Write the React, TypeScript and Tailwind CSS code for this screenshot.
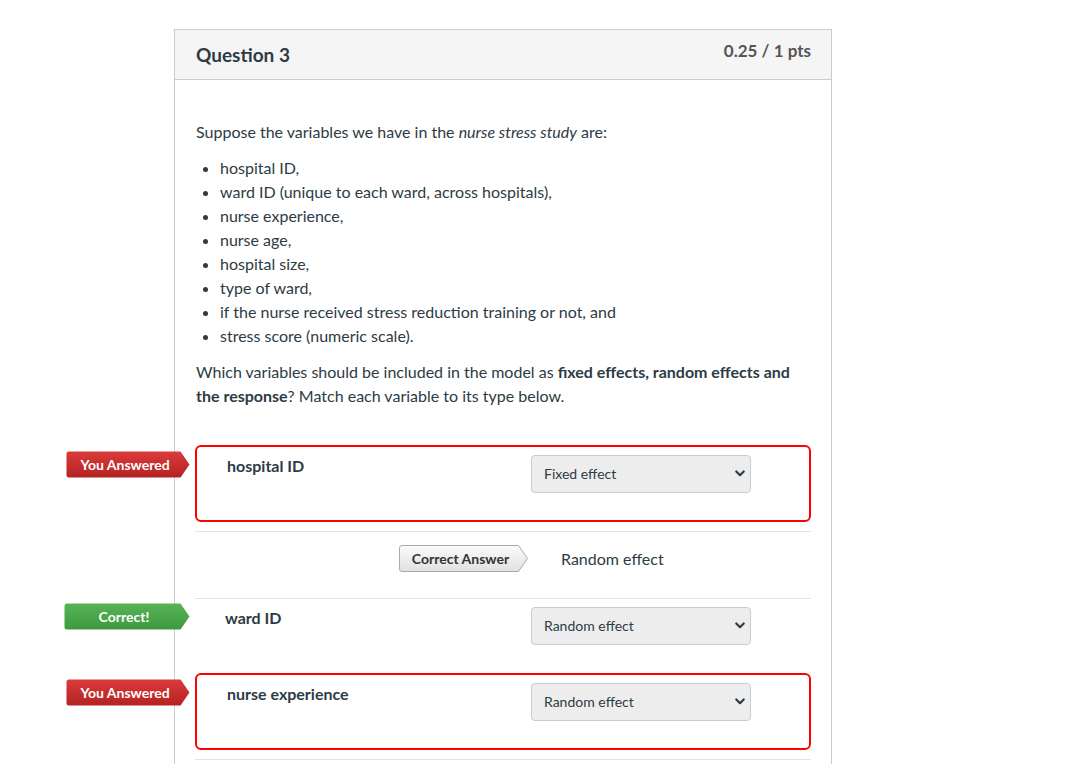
import { ReactNode } from "react";

type BadgeProps = {
    label: string;
    width: number;
    from: string;
    to: string;
    stroke?: string;
    textClass: string;
};

function ArrowBadge({ label, width, from, to, stroke, textClass }: BadgeProps) {
    const h = 27;
    const id = `g-${label.replace(/[^a-z]/gi, "")}`;
    const d = `M3,0.5 H${width - 9.5} L${width - 0.5},${h / 2} L${width - 9.5},${h - 0.5} H3 Q0.5,${h - 0.5} 0.5,${h - 3} V3 Q0.5,0.5 3,0.5 Z`;
    return (
        <div className="relative h-[27px] flex items-center" style={{ width }}>
            <svg className="absolute inset-0" width={width} height={h} viewBox={`0 0 ${width} ${h}`}>
                <defs>
                    <linearGradient id={id} x1="0" y1="0" x2="0" y2="1">
                        <stop offset="0" stopColor={from} />
                        <stop offset="1" stopColor={to} />
                    </linearGradient>
                </defs>
                <path d={d} fill={`url(#${id})`} stroke={stroke ?? "none"} strokeWidth={1} />
            </svg>
            <span className={`relative w-full pr-[6px] text-center text-[14px] font-bold leading-none ${textClass}`}>
                {label}
            </span>
        </div>
    );
}

function FakeSelect({ value }: { value: string }) {
    return (
        <div className="w-[220px] h-[38px] shrink-0 flex items-center justify-between pl-[12px] pr-[5px] pb-[1px] bg-[#ededed] border border-[#c7cdd1] rounded-[4px] text-[14px] text-[#2d3b45]">
            <span>{value}</span>
            <svg width="10" height="7" viewBox="0 0 10 7" fill="none">
                <path d="M1.3 1.5 L5 5.2 L8.7 1.5" stroke="#2d3b45" strokeWidth="2.2" strokeLinecap="round" strokeLinejoin="round" />
            </svg>
        </div>
    );
}

function YouAnswered() {
    return (
        <div className="absolute left-[-129px] top-[6px]">
            <ArrowBadge label="You Answered" width={124} from="#db3b3b" to="#b42222" textClass="text-white" />
        </div>
    );
}

function AnswerRow({ label, value, wrong, badge }: { label: string; value: string; wrong: boolean; badge: ReactNode }) {
    return (
        <div className="relative">
            {badge}
            <div
                className={`flex pt-[8px] pl-[30px] ${wrong ? "border-2 border-[#ff0000] rounded-[6px] pb-[27px]" : "pb-[28px]"}`}
            >
                <div className={`${wrong ? "w-[304px]" : "w-[306px]"} -mt-[1px] shrink-0 text-[16px] font-bold leading-[24px] text-[#2d3b45]`}>
                    {label}
                </div>
                <FakeSelect value={value} />
            </div>
        </div>
    );
}

export default function App() {
    return (
        <div className="min-h-[764px] bg-white pt-[29px] pl-[174px] font-['Lato','Liberation_Sans',sans-serif] text-[#2d3b45]">
            <div className="w-[658px] border border-b-0 border-[#c7cdd1] min-h-[735px]">
                {/* Header */}
                <div className="h-[50px] bg-[#f5f5f5] border-b border-[#c7cdd1] pl-[21px] pr-[20px] flex justify-between items-start">
                    <h2 className="mt-[12px] text-[19px] font-bold leading-[26px] text-[#2d3b45]">Question 3</h2>
                    <div className="mt-[10px] text-[17px] font-bold leading-[22px] text-[#555]">0.25 / 1 pts</div>
                </div>

                {/* Body */}
                <div className="px-[20px] pt-[40px] text-[16px] leading-[24px]">
                    <div className="pl-[1px]">
                        <p>
                            Suppose the variables we have in the <em>nurse stress study</em> are:
                        </p>
                        <ul className="list-disc pl-[24px] mt-[12px]">
                            <li>hospital ID,</li>
                            <li>ward ID (unique to each ward, across hospitals),</li>
                            <li>nurse experience,</li>
                            <li>nurse age,</li>
                            <li>hospital size,</li>
                            <li>type of ward,</li>
                            <li>if the nurse received stress reduction training or not, and</li>
                            <li>stress score (numeric scale).</li>
                        </ul>
                        <p className="mt-[12px]">
                            Which variables should be included in the model as <strong>fixed effects, random effects and the response</strong>? Match each variable to its type below.
                        </p>
                    </div>

                    {/* Answers */}
                    <div className="mt-[37px]">
                        <AnswerRow label="hospital ID" value="Fixed effect" wrong badge={<YouAnswered />} />
                        <div className="mt-[9px] border-t border-b border-[#e2e4e6] h-[68px] flex items-start pt-[13px] pl-[204px]">
                            <ArrowBadge label="Correct Answer" width={129} from="#fbfbfb" to="#e1e1e1" stroke="#a9a9a9" textClass="text-[#333]" />
                            <span className="ml-[33px] mt-[2px] text-[16px] leading-[24px] text-[#2d3b45]">Random effect</span>
                        </div>
                        <AnswerRow
                            label="ward ID"
                            value="Random effect"
                            wrong={false}
                            badge={
                                <div className="absolute left-[-131px] top-[4px]">
                                    <ArrowBadge label="Correct!" width={126} from="#56b356" to="#3f9a3f" textClass="text-white" />
                                </div>
                            }
                        />
                        <AnswerRow label="nurse experience" value="Random effect" wrong badge={<YouAnswered />} />
                        <div className="mt-[9px] border-t border-[#e2e4e6]" />
                    </div>
                </div>
            </div>
        </div>
    );
}
